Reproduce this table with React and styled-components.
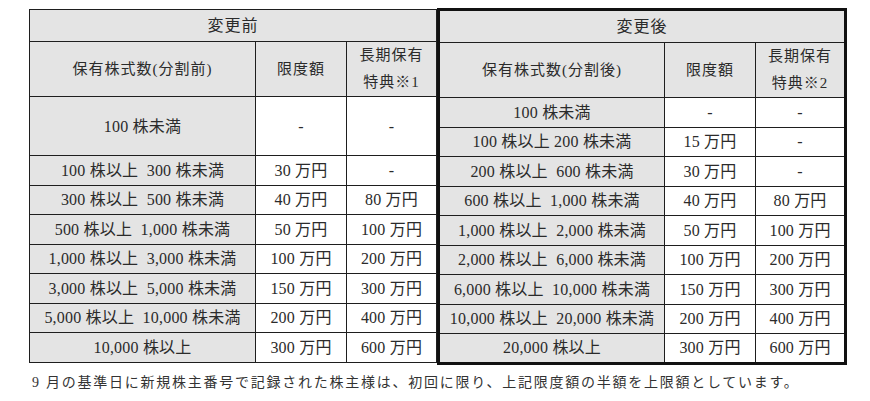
import React from "react";
import styled, { createGlobalStyle } from "styled-components";

const GlobalStyle = createGlobalStyle`
  html, body {
    margin: 0;
    padding: 0;
    background: #ffffff;
  }
  body {
    font-family: "Liberation Serif", "Noto Sans CJK JP", serif;
    color: #2b2b2b;
  }
`;

const Page = styled.div`
  width: 870px;
  height: 401px;
  padding: 8px 0 0 29px;
  box-sizing: border-box;
`;

const Tables = styled.div`
  display: flex;
  align-items: flex-start;
`;

const Table = styled.table`
  border-collapse: collapse;
  table-layout: fixed;
  width: ${(p) => p.$width}px;
  font-size: 16px;
  border: ${(p) => (p.$thick ? "3px solid #111" : "none")};
  margin-top: ${(p) => (p.$thick ? "0" : "1px")};
`;

const Cell = styled.td`
  border: 1.5px solid #1e1e1e;
  background: ${(p) => (p.$gray ? "#e4e4e4" : "#ffffff")};
  text-align: center;
  vertical-align: middle;
  padding: 0;
  white-space: pre;
  line-height: 27px;
  letter-spacing: 0.2px;
`;

const Title = styled(Cell)`
  font-size: 16px;
  height: 31px;
  letter-spacing: 1px;
`;

const HeadCell = styled(Cell)`
  height: 53px;
  font-size: 15px;
  letter-spacing: 1px;
`;

const Row = styled.tr`
  height: ${(p) => p.$h}px;
`;

const Note = styled.p`
  margin: 6px 0 0 3px;
  font-size: 14px;
  letter-spacing: 1.75px;
  white-space: pre;
  color: #333;
`;

const before = [
  ["100 株以上  300 株未満", "30 万円", "-"],
  ["300 株以上  500 株未満", "40 万円", "80 万円"],
  ["500 株以上  1,000 株未満", "50 万円", "100 万円"],
  ["1,000 株以上  3,000 株未満", "100 万円", "200 万円"],
  ["3,000 株以上  5,000 株未満", "150 万円", "300 万円"],
  ["5,000 株以上  10,000 株未満", "200 万円", "400 万円"],
  ["10,000 株以上", "300 万円", "600 万円"],
];

const after = [
  ["100 株未満", "-", "-"],
  ["100 株以上 200 株未満", "15 万円", "-"],
  ["200 株以上  600 株未満", "30 万円", "-"],
  ["600 株以上  1,000 株未満", "40 万円", "80 万円"],
  ["1,000 株以上  2,000 株未満", "50 万円", "100 万円"],
  ["2,000 株以上  6,000 株未満", "100 万円", "200 万円"],
  ["6,000 株以上  10,000 株未満", "150 万円", "300 万円"],
  ["10,000 株以上  20,000 株未満", "200 万円", "400 万円"],
  ["20,000 株以上", "300 万円", "600 万円"],
];

function Cols() {
  return (
    <colgroup>
      <col style={{ width: 226 }} />
      <col style={{ width: 91 }} />
      <col style={{ width: 90 }} />
    </colgroup>
  );
}

function Header({ title, sharesLabel, note }) {
  return (
    <thead>
      <tr>
        <Title $gray colSpan={3}>{title}</Title>
      </tr>
      <tr>
        <HeadCell $gray>{sharesLabel}</HeadCell>
        <HeadCell $gray>限度額</HeadCell>
        <HeadCell $gray>
          長期保有
          <br />
          特典{note}
        </HeadCell>
      </tr>
    </thead>
  );
}

export default function App() {
  return (
    <>
      <GlobalStyle />
      <Page>
        <Tables>
          <Table $width={407}>
            <Cols />
            <Header title="変更前" sharesLabel="保有株式数(分割前)" note="※1" />
            <tbody>
              <Row $h={59}>
                <Cell $gray>100 株未満</Cell>
                <Cell>-</Cell>
                <Cell>-</Cell>
              </Row>
              {before.map(([shares, limit, bonus]) => (
                <Row $h={29.5} key={shares}>
                  <Cell $gray>{shares}</Cell>
                  <Cell>{limit}</Cell>
                  <Cell>{bonus}</Cell>
                </Row>
              ))}
            </tbody>
          </Table>
          <Table $width={410} $thick>
            <Cols />
            <Header title="変更後" sharesLabel="保有株式数(分割後)" note="※2" />
            <tbody>
              {after.map(([shares, limit, bonus]) => (
                <Row $h={29.5} key={shares}>
                  <Cell $gray>{shares}</Cell>
                  <Cell>{limit}</Cell>
                  <Cell>{bonus}</Cell>
                </Row>
              ))}
            </tbody>
          </Table>
        </Tables>
        <Note>9 月の基準日に新規株主番号で記録された株主様は、初回に限り、上記限度額の半額を上限額としています。</Note>
      </Page>
    </>
  );
}
